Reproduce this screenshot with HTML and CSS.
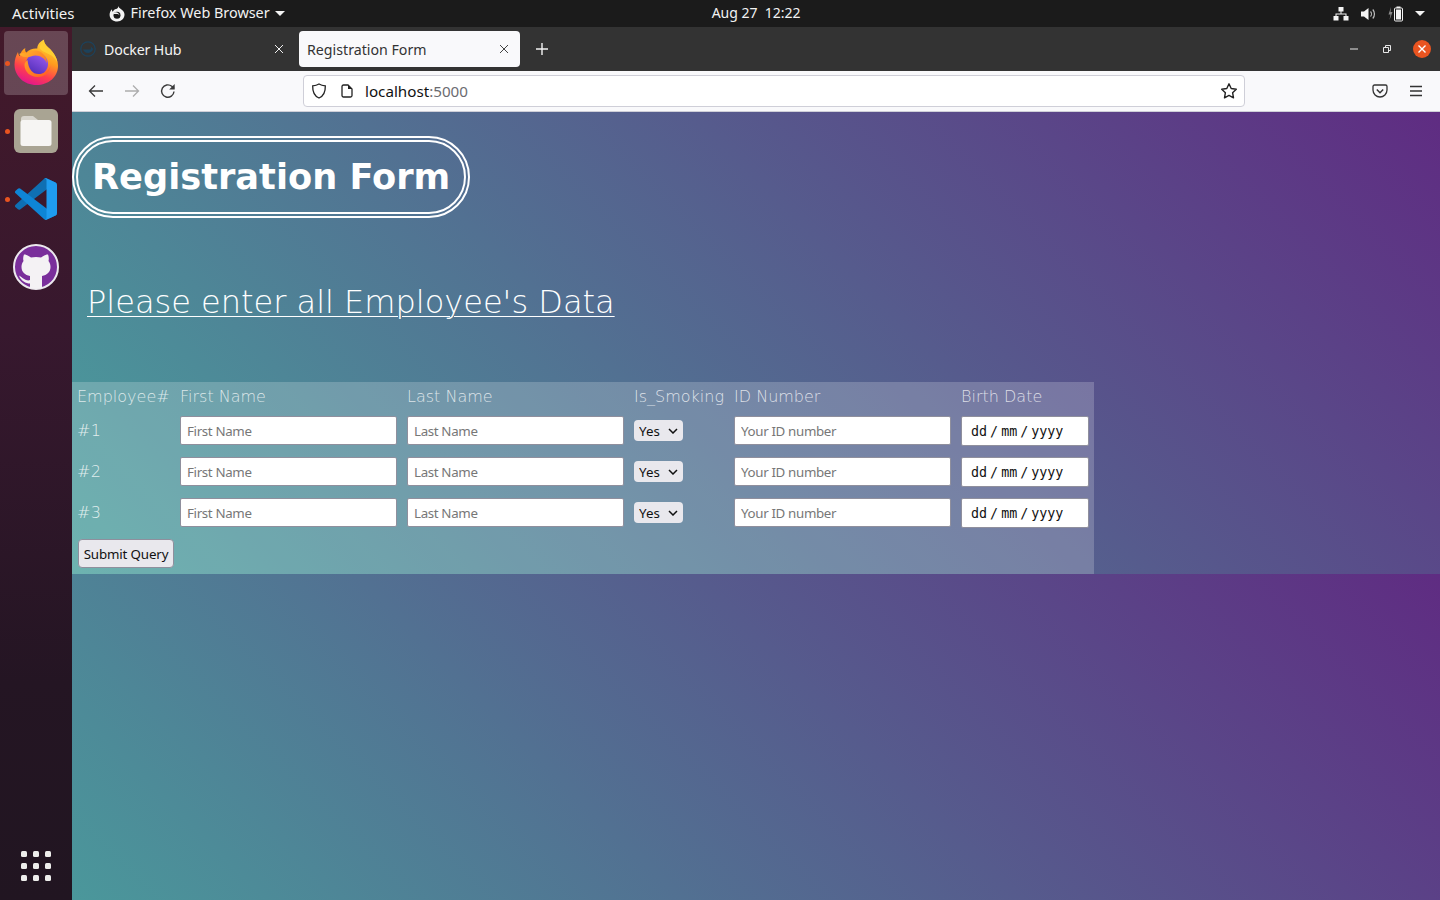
FILE: index.html
```html
<!DOCTYPE html>
<html lang="en">
<head>
<meta charset="utf-8">
<title>Registration Form</title>
<link rel="stylesheet" href="styles.css">
</head>
<body>
<header class="topbar">
  <span class="activities">Activities</span>
  <span class="appmenu">
    <svg class="appglyph" width="16" height="16" viewBox="0 0 16 16"><path fill="#f4f4f4" d="M9.500 0c.2 1.400 1 2.100 2.300 3 2.400 1.500 3.700 3.400 3.700 5.600 0 4-3.200 7-7.300 7S.6 12.600.6 8.700c0-2.200.9-4.200 2.500-5.500-.2 1 0 2 .7 2.600C4.500 3.800 6.500 2.900 8 2.800 8.900 2 9.400 1 9.500 0z"/><circle cx="8" cy="9.200" r="3.500" fill="#1b1b1b"/><path fill="#f4f4f4" d="M4 7.500c1.500.8 3 .4 4.500.6 1.200.2 2 1 2 2.200 0-2.800-2.500-4.400-5-3.800z"/></svg>
    <span class="apptitle">Firefox Web Browser</span>
    <svg width="10" height="5" viewBox="0 0 10 5"><path fill="#f4f4f4" d="M0 0h10L5 5z"/></svg>
  </span>
  <time class="clock">Aug 27&nbsp;&nbsp;12:22</time>
  <span class="status">
    <svg width="16" height="14" viewBox="0 0 16 14"><path fill="#f4f4f4" d="M5.500 0h5v4.500H8.500V6.500H13.500V9H15.500V13.500H10.500V9H12.500V7.500H3.500V9H5.500V13.500H.5V9H2.500V6.500H7.500V4.500H5.500z"/></svg>
    <svg width="16" height="14" viewBox="0 0 16 14"><path fill="#f4f4f4" d="M0 4.500h3L7.500 1v12L3 9.500H0z"/><path fill="none" stroke="#bdbdbd" stroke-width="1.200" d="M9.500 4.500c1.200 1.300 1.200 3.700 0 5M11.800 2.500c2.200 2.500 2.200 6.500 0 9"/></svg>
    <svg class="battery" width="16" height="16" viewBox="0 0 16 16"><path fill="#8a8a8a" d="M3 1 .5 8.500H2.500L1.500 14l3-8H2.500z"/><rect x="6.500" y="2" width="8" height="13" rx="1" fill="none" stroke="#f4f4f4"/><rect x="8.500" y=".5" width="4" height="1.500" fill="#f4f4f4"/><rect x="8" y="3.500" width="5" height="10" fill="#f4f4f4"/></svg>
    <svg class="statuscaret" width="10" height="5" viewBox="0 0 10 5"><path fill="#f4f4f4" d="M0 0h10L5 5z"/></svg>
  </span>
</header>

<div class="desktop">
  <nav class="dock">
    <div class="dock-item is-active">
      <span class="run-dot"></span>
      <svg class="ff" width="44" height="46" viewBox="0 0 44 46">
        <defs>
          <linearGradient id="ffbody" x1=".75" y1="0" x2=".35" y2="1"><stop offset="0" stop-color="#ffd93b"/><stop offset=".42" stop-color="#ff9c1e"/><stop offset=".72" stop-color="#ff3f4d"/><stop offset="1" stop-color="#e2158e"/></linearGradient>
          <linearGradient id="ffball" x1=".8" y1="0" x2=".2" y2="1"><stop offset="0" stop-color="#9c5cf0"/><stop offset="1" stop-color="#4c2bb5"/></linearGradient>
          <linearGradient id="fftail" x1="0" y1="0" x2="1" y2="1"><stop offset="0" stop-color="#ffb52b"/><stop offset="1" stop-color="#ff5a1f"/></linearGradient>
        </defs>
        <path fill="url(#ffbody)" d="M30 1c0 4 3 6 6 9 5 5 8 11 8 17 0 11-9.500 19-21.500 19C10 46 .5 37 .5 25.500c0-5 1.500-9 3.500-12.500.2 2 .8 3.300 1.800 4.200.4-3.500 2.500-6.500 5.500-8.200-.5 2 0 3.500 1 4.500 3-3 7-4.500 11-4 0-4 2.500-7 7-9z"/>
        <path fill="#ffce32" d="M30 1c0 4 3 6 6 9 4 4 7 9 7.500 14-2-5-6-8-10-9.500C30 13 27 11.500 25.500 9 26 6 27.500 3 30 1z"/>
        <circle cx="23" cy="25" r="11" fill="url(#ffball)"/>
        <path fill="url(#fftail)" d="M5 15c3 3.500 6 3 9.500 3 2-.1 4-1.500 7-1.500 5 0 10 3 11.500 8 0-7-5-13-12-13-3 0-6 1-8 3-2.500-.5-5-1-8 .5zM13.500 21c-1.500 1-3 3-3 5 0 7 6 12 13 12 7 0 12-4 13-11-2 5.500-7 8-12 8-6 0-10-4.500-11-14z"/>
      </svg>
    </div>
    <div class="dock-item">
      <span class="run-dot"></span>
      <svg width="44" height="44" viewBox="0 0 44 44">
        <rect width="44" height="44" rx="6" fill="#a9a493"/>
        <path fill="#d8d5cd" d="M7 10a3 3 0 0 1 3-3h9l5 4h10v6H7z"/>
        <rect x="6.500" y="11" width="31" height="26" rx="2.500" fill="#f6f5f3"/>
      </svg>
    </div>
    <div class="dock-item">
      <span class="run-dot"></span>
      <svg width="42" height="42" viewBox="0 0 100 100">
        <path fill="#0f6fb3" d="M96.500 10.800 75.900.9a6.200 6.200 0 0 0-7.100 1.200L1.400 63.500a4.200 4.200 0 0 0 0 6.200l5.500 5a4.200 4.200 0 0 0 5.300.2L93.300 13.400c2.700-2.100 6.700-.2 6.700 3.300v-.2a6.200 6.200 0 0 0-3.500-5.700z"/>
        <path fill="#0e85d6" d="M96.500 89.200 75.900 99.100a6.200 6.200 0 0 1-7.100-1.200L1.400 36.500a4.200 4.200 0 0 1 0-6.200l5.500-5a4.200 4.200 0 0 1 5.300-.2L93.300 86.600c2.700 2.100 6.700.2 6.700-3.300v.2a6.200 6.200 0 0 1-3.500 5.700z"/>
        <path fill="#1f9cf0" d="M75.900 99.100a6.200 6.200 0 0 1-7.100-1.200c2.300 2.300 6.200.7 6.200-2.600V4.700c0-3.300-3.900-4.900-6.200-2.600a6.200 6.200 0 0 1 7.100-1.200l20.600 9.900A6.200 6.200 0 0 1 100 16.400v67.200a6.200 6.200 0 0 1-3.500 5.600z"/>
      </svg>
    </div>
    <div class="dock-item">
      <svg width="46" height="46" viewBox="0 0 46 46">
        <circle cx="23" cy="23" r="22" fill="#7a2f9b" stroke="#ece9ee" stroke-width="2"/>
        <path fill="#f4f2f4" d="M11 10.500C13.500 10.500 16 12 18 13.500C21 12.800 25 12.800 28 13.500C30 12 32.500 10.500 35 10.500C36 13 36 15.500 35.500 17C37 19 37.500 21 37.500 23C37.500 28 34 31 29 32V44C25 45 21 45 17 44V39.500C13 39.500 8 37 6 31.500C9 33 10 35 13 36C14.500 36.500 16 36.500 17 36V32C12 31 8.500 28 8.500 23C8.500 21 9 19 10.500 17C10 15.500 10 13 11 10.500z"/>
      </svg>
    </div>
    <div class="dock-grid">
      <i></i><i></i><i></i><i></i><i></i><i></i><i></i><i></i><i></i>
    </div>
  </nav>

  <main class="browser">
    <div class="tabstrip">
      <div class="tab">
        <svg class="favicon" width="16" height="16" viewBox="0 0 16 16"><circle cx="8" cy="8" r="7.200" fill="none" stroke="#1c425c" stroke-width="1.200"/><path fill="#1c425c" d="M3 8.500h7.500c.5-1.500.5-2.500 0-3 1 .3 1.500 1 1.700 1.800l1.300.3c-.5 2-2.500 4.400-5.500 4.400-2.500 0-4-1.300-5-3.500z"/></svg>
        <span class="tab-title">Docker Hub</span>
        <svg class="tab-x" width="10" height="10" viewBox="0 0 10 10"><path stroke="#f0f0f0" stroke-width="1" d="M1 1l8 8M9 1l-8 8"/></svg>
      </div>
      <div class="tab is-current">
        <span class="tab-title">Registration Form</span>
        <svg class="tab-x" width="10" height="10" viewBox="0 0 10 10"><path stroke="#444" stroke-width="1" d="M1 1l8 8M9 1l-8 8"/></svg>
      </div>
      <svg class="newtab" width="14" height="14" viewBox="0 0 14 14"><path stroke="#f4f4f4" stroke-width="1.400" d="M7 1v12M1 7h12"/></svg>
      <div class="winbtns">
        <svg class="win-min" width="8" height="2" viewBox="0 0 8 2"><path stroke="#e8e8e8" d="M0 1h8"/></svg>
        <svg width="8" height="8" viewBox="0 0 8 8"><path fill="none" stroke="#e8e8e8" d="M.5 2.500h5v5h-5zM2.500 2V.5h5v5H6"/></svg>
        <svg width="18" height="18" viewBox="0 0 18 18"><circle cx="9" cy="9" r="9" fill="#e95420"/><path stroke="#fff" stroke-width="1.400" d="M5.500 5.500l7 7M12.500 5.500l-7 7"/></svg>
      </div>
    </div>

    <div class="toolbar">
      <svg class="tool" width="16" height="16" viewBox="0 0 16 16"><path fill="none" stroke="#3a3a3a" stroke-width="1.300" d="M15 8H1.500M7 2.500 1.500 8 7 13.500"/></svg>
      <svg class="tool" width="16" height="16" viewBox="0 0 16 16"><path fill="none" stroke="#adadad" stroke-width="1.300" d="M1 8h13.500M9 2.500 14.500 8 9 13.500"/></svg>
      <svg width="16" height="16" viewBox="0 0 16 16"><path fill="none" stroke="#3a3a3a" stroke-width="1.400" d="M14 8.500A6.200 6.200 0 1 1 11.800 3.300L14 5.500"/><path fill="#3a3a3a" d="M14.700 1v5.500H9.200z"/></svg>
      <div class="urlbar">
        <svg width="16" height="16" viewBox="0 0 16 16"><path fill="none" stroke="#222" stroke-width="1.300" d="M8 1c2 1.200 4 1.700 6.300 1.900.2 5.800-1.700 10-6.300 12.100C3.400 12.900 1.500 8.700 1.700 2.900 4 2.700 6 2.200 8 1z"/></svg>
        <svg class="pageicon" width="12" height="14" viewBox="0 0 12 14"><path fill="none" stroke="#222" stroke-width="1.300" d="M1 2.500A1.500 1.500 0 0 1 2.500 1H7l4 4v6.500A1.500 1.500 0 0 1 9.500 13h-7A1.500 1.500 0 0 1 1 11.500z"/><path fill="#222" d="M7 1l4 4H7z"/></svg>
        <span class="url"><b>localhost</b><span class="port">:5000</span></span>
        <svg class="star" width="18" height="18" viewBox="0 0 18 18"><path fill="none" stroke="#222" stroke-width="1.400" stroke-linejoin="round" d="M9 1.800l2.200 4.700 5.100.7-3.700 3.500.9 5.100L9 13.400l-4.500 2.400.9-5.100L1.700 7.200l5.100-.7z"/></svg>
      </div>
      <svg class="pocket" width="16" height="14" viewBox="0 0 16 14"><path fill="none" stroke="#333" stroke-width="1.300" d="M1 2.500A1.500 1.500 0 0 1 2.500 1h11A1.500 1.500 0 0 1 15 2.500V6c0 4-3.200 7-7 7s-7-3-7-7z"/><path fill="none" stroke="#333" stroke-width="1.500" d="M4.800 5.500 8 8.700l3.200-3.200"/></svg>
      <svg class="menu" width="14" height="12" viewBox="0 0 14 12"><path stroke="#333" stroke-width="1.300" d="M1 1.500h12M1 6h12M1 10.500h12"/></svg>
    </div>

    <div class="page">
      <h1 class="title">Registration Form</h1>
      <h2 class="subtitle">Please enter all Employee's Data</h2>
      <form class="regform">
        <table class="emp">
          <thead>
            <tr><th>Employee#</th><th>First Name</th><th>Last Name</th><th>Is_Smoking</th><th>ID Number</th><th>Birth Date</th></tr>
          </thead>
          <tbody>
            <tr>
              <td class="num">#1</td>
              <td><input class="field" type="text" placeholder="First Name"></td>
              <td><input class="field" type="text" placeholder="Last Name"></td>
              <td><span class="selectwrap"><select class="yesno"><option>Yes</option><option>No</option></select><svg class="chev" width="10" height="6" viewBox="0 0 10 6"><path fill="none" stroke="#111" stroke-width="1.500" d="M1 1l4 4 4-4"/></svg></span></td>
              <td><input class="field" type="text" placeholder="Your ID number"></td>
              <td><input class="date" type="text" value="dd / mm / yyyy"></td>
            </tr>
            <tr>
              <td class="num">#2</td>
              <td><input class="field" type="text" placeholder="First Name"></td>
              <td><input class="field" type="text" placeholder="Last Name"></td>
              <td><span class="selectwrap"><select class="yesno"><option>Yes</option><option>No</option></select><svg class="chev" width="10" height="6" viewBox="0 0 10 6"><path fill="none" stroke="#111" stroke-width="1.500" d="M1 1l4 4 4-4"/></svg></span></td>
              <td><input class="field" type="text" placeholder="Your ID number"></td>
              <td><input class="date" type="text" value="dd / mm / yyyy"></td>
            </tr>
            <tr>
              <td class="num">#3</td>
              <td><input class="field" type="text" placeholder="First Name"></td>
              <td><input class="field" type="text" placeholder="Last Name"></td>
              <td><span class="selectwrap"><select class="yesno"><option>Yes</option><option>No</option></select><svg class="chev" width="10" height="6" viewBox="0 0 10 6"><path fill="none" stroke="#111" stroke-width="1.500" d="M1 1l4 4 4-4"/></svg></span></td>
              <td><input class="field" type="text" placeholder="Your ID number"></td>
              <td><input class="date" type="text" value="dd / mm / yyyy"></td>
            </tr>
            <tr>
              <td class="actions" colspan="6"><button class="submit" type="button">Submit Query</button></td>
            </tr>
          </tbody>
        </table>
      </form>
    </div>
  </main>
</div>
</body>
</html>
```

FILE: styles.css
```css
* { box-sizing: border-box; }
html, body { height: 100%; }
body {
  margin: 0;
  overflow: hidden;
  display: flex;
  flex-direction: column;
  background: #1c1c1c;
  font-family: "Noto Sans", sans-serif;
}

/* top bar */
.topbar {
  height: 27px;
  flex: none;
  display: flex;
  align-items: center;
  background: #1b1b1b;
  color: #f2f2f2;
  font-size: 14.400px;
}
.activities { margin: 0 0 2px 12px; font-size: 15px; }
.appmenu { display: flex; align-items: center; margin-left: 34px; }
.appglyph { margin-right: 6px; }
.apptitle { margin: 0 5px 2px 0; }
.clock { margin: 0 0 2px 427px; font-size: 14px; white-space: pre; }
.status { margin-left: auto; margin-right: 15px; display: flex; align-items: center; gap: 12px; }
.battery { margin-left: -1px; }
.statuscaret { margin-left: -1px; }

/* desktop */
.desktop { flex: 1; min-height: 0; display: flex; }
.dock {
  width: 72px;
  flex: none;
  display: flex;
  flex-direction: column;
  align-items: center;
  padding: 4px 0 0;
  background: linear-gradient(180deg, #43192a 0%, #37182e 35%, #241523 75%, #211521 100%);
}
.dock-item {
  position: relative;
  width: 64px;
  height: 64px;
  margin-bottom: 4px;
  border-radius: 4px;
  display: flex;
  align-items: center;
  justify-content: center;
}
.dock-item.is-active { background: rgba(255, 255, 255, .2); }
.ff { margin-bottom: 2px; }
.run-dot {
  position: absolute;
  left: 1px;
  top: 30px;
  width: 5px;
  height: 5px;
  border-radius: 50%;
  background: #e95420;
}
.dock-grid {
  margin-top: auto;
  margin-bottom: 19px;
  display: grid;
  grid-template-columns: repeat(3, 6px);
  grid-auto-rows: 6px;
  gap: 6px;
}
.dock-grid i { background: #eeeeec; border-radius: 1.500px; }

/* browser */
.browser { flex: 1; min-width: 0; display: flex; flex-direction: column; }
.tabstrip {
  height: 44px;
  flex: none;
  display: flex;
  align-items: center;
  background: #333333;
  color: #f4f4f4;
  font-size: 14.200px;
}
.tab {
  width: 221px;
  height: 36px;
  margin-left: 6px;
  padding: 0 8px 0 2px;
  border-radius: 4px;
  display: flex;
  align-items: center;
}
.tab.is-current {
  margin-left: 0;
  padding-left: 8px;
  background: #f9f9fb;
  color: #333;
}
.favicon { margin-right: 8px; }
.tab-title { flex: 1; white-space: nowrap; letter-spacing: -.15px; }
.is-current .tab-title { letter-spacing: 0; }
.tab-x { margin-right: 7px; }
.is-current .tab-x { margin-right: 3px; }
.newtab { margin-left: 15px; }
.winbtns { margin-left: auto; margin-right: 9px; display: flex; align-items: center; gap: 22px; }
.win-min { margin-right: 3px; }

.toolbar {
  height: 41px;
  flex: none;
  display: flex;
  align-items: center;
  background: #f9f9fb;
  border-bottom: 1px solid #cfcfd8;
  padding: 0 16px 0 16px;
}
.tool { margin-right: 20px; }
.urlbar {
  width: 942px;
  height: 32px;
  margin-left: 127px;
  padding: 0 6px 0 7px;
  display: flex;
  align-items: center;
  background: #fff;
  border: 1px solid #cfcfd8;
  border-radius: 4px;
  font-size: 15.200px;
}
.pageicon { margin-left: 14px; }
.url { margin-left: 12px; flex: 1; }
.url b { font-weight: 400; color: #111; }
.port { color: #6b6b70; }
.pocket { margin-left: 127px; }
.menu { margin-left: 21px; }

/* page */
.page {
  flex: 1;
  min-height: 0;
  display: flex;
  flex-direction: column;
  align-items: flex-start;
  background: linear-gradient(45deg, #49a09d, #5f2c82) 0 0 / 100% 462px repeat-y;
  color: #fff;
  font-family: "DejaVu Sans", sans-serif;
}
.title {
  margin: 24px 0 0;
  padding: 0 14px 2px;
  height: 82px;
  display: flex;
  align-items: center;
  border: 6px double #fff;
  border-radius: 41px;
  font-size: 35.200px;
  font-weight: 700;
  white-space: nowrap;
}
.subtitle {
  margin: 64px 0 0 15px;
  font-size: 32px;
  font-weight: 200;
  line-height: 40px;
  text-decoration: underline;
  text-decoration-thickness: 1px;
  text-underline-offset: 3px;
}
.regform { margin-top: 60px; }
.emp {
  border-spacing: 2px;
  border-collapse: separate;
  background: rgba(255, 255, 255, .2);
}
.emp th {
  padding: 3px 4px 4px;
  text-align: left;
  font-size: 16px;
  font-weight: 200;
  line-height: 19px;
  color: rgba(255, 255, 255, .75);
  white-space: nowrap;
}
.emp th:first-child { width: 100px; padding-left: 3px; padding-right: 4px; }
.emp th:last-child { padding-right: 3px; }
.emp td { padding: 4px; height: 39px; vertical-align: top; }
.emp td:last-child { padding-right: 3px; }
.emp td.num {
  padding: 9px 4px 0 3px;
  font-size: 16px;
  font-weight: 200;
  line-height: 20px;
  letter-spacing: .3px;
  color: rgba(255, 255, 255, .8);
}
.emp td.actions { height: 37px; padding-bottom: 4px; }
.field {
  display: block;
  width: 217px;
  height: 29px;
  padding: 0 6px;
  border: 1px solid #8f8f9d;
  border-radius: 2px;
  background: #fff;
  font: 13.330px "Noto Sans", sans-serif;
  letter-spacing: -.35px;
}
.field::placeholder { color: #777; opacity: 1; }
.date {
  display: block;
  width: 128px;
  height: 30px;
  padding: 0 9px;
  border: 1px solid #8f8f9d;
  border-radius: 2px;
  background: #fff;
  color: #111;
  font: 13.330px "DejaVu Sans Mono", monospace;
  word-spacing: -5px;
}
.selectwrap { position: relative; display: block; width: 49px; height: 21px; margin-top: 4px; }
.yesno {
  display: block;
  width: 49px;
  height: 21px;
  padding: 0 0 0 5px;
  appearance: none;
  border: 0;
  border-radius: 4px;
  background: #e9e8ed;
  color: #111;
  font: 13.330px "Noto Sans", sans-serif;
}
.chev { position: absolute; right: 5px; top: 8px; pointer-events: none; }
.submit {
  display: block;
  width: 96px;
  height: 29px;
  padding: 0;
  border: 1px solid #8f8f9d;
  border-radius: 4px;
  background: #e9e8ed;
  color: #111;
  font: 13.330px "Noto Sans", sans-serif;
  letter-spacing: -.15px;
}
```
